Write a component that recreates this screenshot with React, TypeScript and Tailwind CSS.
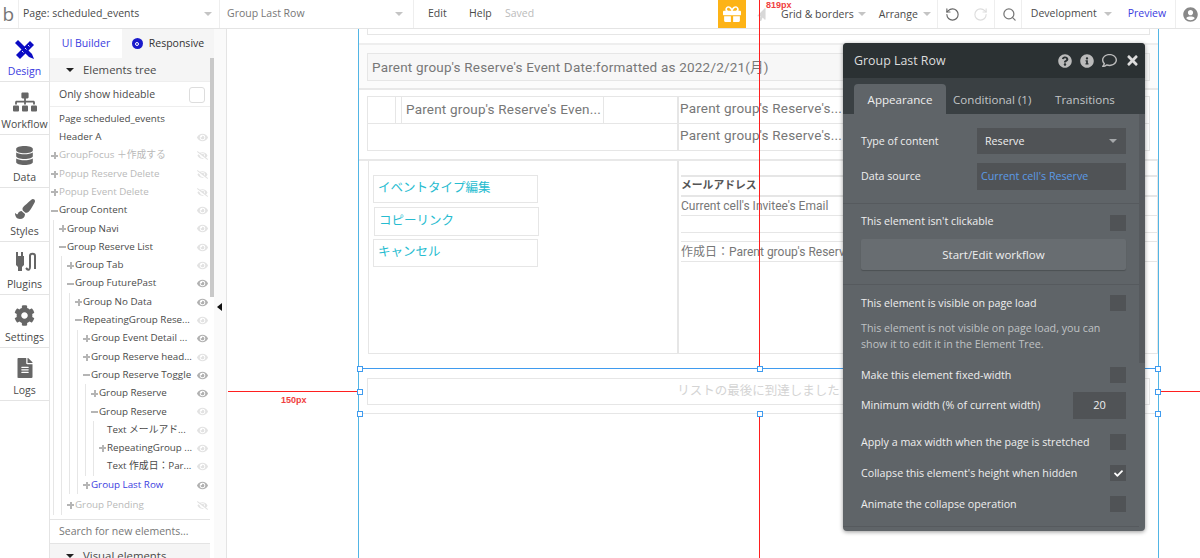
import { FaCheck, FaCog, FaDatabase, FaEye, FaEyeSlash, FaFileAlt, FaGift, FaInfoCircle, FaMousePointer, FaPaintBrush, FaQuestionCircle, FaRegComment, FaSitemap, FaTimes, FaUserCircle } from 'react-icons/fa';
import { RotateCcw, RotateCw, Search } from 'lucide-react';
import type { ReactNode } from 'react';

interface TreeNode {
  label: string;
  sign?: '+' | '-';
  muted?: boolean;
  blue?: boolean;
  spaced?: boolean;
  eye?: 'dark' | 'light' | 'off';
  children?: TreeNode[];
}

const tree: TreeNode[] = [
  { label: 'Page scheduled_events' },
  { label: 'Header A', eye: 'light' },
  { label: 'GroupFocus ＋作成する', sign: '+', muted: true, eye: 'off' },
  { label: 'Popup Reserve Delete', sign: '+', muted: true, eye: 'off' },
  { label: 'Popup Event Delete', sign: '+', muted: true, eye: 'off' },
  {
    label: 'Group Content', sign: '-', eye: 'light',
    children: [
      { label: 'Group Navi', sign: '+', eye: 'light' },
      {
        label: 'Group Reserve List', sign: '-', eye: 'light',
        children: [
          { label: 'Group Tab', sign: '+', eye: 'light' },
          {
            label: 'Group FuturePast', sign: '-', eye: 'dark',
            children: [
              { label: 'Group No Data', sign: '+', eye: 'dark' },
              {
                label: 'RepeatingGroup Rese...', sign: '-', eye: 'light',
                children: [
                  { label: 'Group Event Detail ...', sign: '+', eye: 'dark' },
                  { label: 'Group Reserve head...', sign: '+', eye: 'light' },
                  {
                    label: 'Group Reserve Toggle', sign: '-', eye: 'dark',
                    children: [
                      { label: 'Group Reserve', sign: '+', eye: 'dark' },
                      {
                        label: 'Group Reserve', sign: '-', eye: 'light',
                        children: [
                          { label: 'Text メールアド...', eye: 'light' },
                          { label: 'RepeatingGroup ...', sign: '+', eye: 'light' },
                          { label: 'Text 作成日：Par...', eye: 'light' },
                        ],
                      },
                    ],
                  },
                  { label: 'Group Last Row', sign: '+', blue: true, eye: 'dark' },
                ],
              },
            ],
          },
          { label: 'Group Pending', sign: '+', muted: true, spaced: true, eye: 'off' },
        ],
      },
    ],
  },
];

function TreeRows({ nodes }: { nodes: TreeNode[] }) {
  return (
    <>
      {nodes.map((node, i) => (
        <div key={i} className={node.spaced ? 'pt-[2px]' : ''}>
          <div className="flex h-[18.3px] items-center whitespace-nowrap pr-[2px] text-[9.8px]">
            {node.sign ? (
              <span className="relative h-[8px] w-[8px] shrink-0">
                <span className="absolute left-0 top-[3px] h-[2px] w-[7px] bg-[#b5b5b5]" />
                {node.sign === '+' && <span className="absolute left-[2.5px] top-[0.5px] h-[7px] w-[2px] bg-[#b5b5b5]" />}
              </span>
            ) : (
              <span className="w-[8px] shrink-0" />
            )}
            <span className={node.blue ? 'text-[#3b3be0]' : node.muted ? 'text-[#b9b9b9]' : 'text-[#4a4a4a]'}>{node.label}</span>
            {node.eye === 'dark' && <FaEye className="ml-auto text-[11px] text-[#b0b0b0]" />}
            {node.eye === 'light' && <FaEye className="ml-auto text-[11px] text-[#e2e2e2]" />}
            {node.eye === 'off' && <FaEyeSlash className="ml-auto text-[11px] text-[#e2e2e2]" />}
          </div>
          {node.children && (
            <div className="ml-[2px] border-l border-[#e6e6e6] pl-[5px]">
              <TreeRows nodes={node.children} />
            </div>
          )}
        </div>
      ))}
    </>
  );
}

function DesignIcon() {
  return (
    <svg viewBox="0 0 20 19" className="h-[19px] w-[20px]" fill="#0b0bc4">
      <path d="M3 0 L0 3 L14 17 L19 19 L17 14 Z" />
      <path d="M15 1 L19 5 L5 19 L1 15 Z" />
      <path d="M13 5 L14.5 6.5 M10 8 L11.5 9.5 M7 11 L8.5 12.5" stroke="#ffffff" strokeWidth="0.9" />
    </svg>
  );
}

function PluginIcon() {
  return (
    <svg viewBox="0 0 22 20" className="h-[20px] w-[22px]" fill="none">
      <path d="M2 0h2v4h3V0h2v4h1v9l-2 2v4H4v-4l-2-2V4H0h2z" fill="#666666" />
      <path d="M12 16c2.5 3 4 2 4-1V4c0-3 5-3 5 0v13" stroke="#666666" strokeWidth="2" />
    </svg>
  );
}

const navItems: { label: string; icon: ReactNode; h: string; active?: boolean }[] = [
  { label: 'Design', icon: <DesignIcon />, h: 'h-[53px]', active: true },
  { label: 'Workflow', icon: <FaSitemap className="text-[24px] text-[#666666]" />, h: 'h-[53px]' },
  { label: 'Data', icon: <FaDatabase className="text-[19px] text-[#666666]" />, h: 'h-[53px]' },
  { label: 'Styles', icon: <FaPaintBrush className="text-[20px] text-[#666666]" />, h: 'h-[54px]' },
  { label: 'Plugins', icon: <PluginIcon />, h: 'h-[53px]' },
  { label: 'Settings', icon: <FaCog className="text-[21px] text-[#666666]" />, h: 'h-[53px]' },
  { label: 'Logs', icon: <FaFileAlt className="text-[20px] text-[#666666]" />, h: 'h-[53px]' },
];

function Caret({ className }: { className: string }) {
  return <span className={`inline-block border-x-[4px] border-t-[4px] border-x-transparent ${className}`} />;
}

function TopBar() {
  return (
    <div className="flex h-[29px] items-center whitespace-nowrap border-b border-[#e4e4e4] bg-white text-[10.5px] text-[#4a4a4a]">
      <div className="flex h-full w-[19px] items-center justify-end overflow-hidden border-r border-[#eeeeee] pr-[4px] text-[19px] leading-none text-[#777777]">b</div>
      <div className="flex h-full w-[201px] items-center justify-between border-r border-[#eeeeee] pl-[4px] pr-[7px]">
        <span>Page: scheduled_events</span>
        <Caret className="border-t-[#c4c4c4]" />
      </div>
      <div className="flex h-full w-[194px] items-center justify-between border-r border-[#eeeeee] pl-[7px] pr-[10px] text-[#777777]">
        <span>Group Last Row</span>
        <Caret className="border-t-[#c4c4c4]" />
      </div>
      <span className="ml-[14px] w-[41px]">Edit</span>
      <span className="w-[36px]">Help</span>
      <span className="w-[213px] text-[#bbbbbb]">Saved</span>
      <div className="flex h-full w-[28px] shrink-0 items-center justify-center bg-[#fdb316]">
        <FaGift className="text-[18px] text-white" />
      </div>
      <FaMousePointer className="ml-[9px] shrink-0 -scale-x-100 text-[13px] text-[#d8d8d8]" />
      <span className="ml-[13px] pt-[1px]">Grid &amp; borders</span>
      <Caret className="ml-[4px] border-t-[#c4c4c4]" />
      <span className="ml-[13px] pt-[1px]">Arrange</span>
      <Caret className="ml-[5px] border-t-[#c4c4c4]" />
      <div className="ml-[6px] h-full border-l border-[#eeeeee]" />
      <RotateCcw className="ml-[7px] h-[15px] w-[15px] shrink-0 text-[#666666]" strokeWidth={1.8} />
      <RotateCw className="ml-[13px] h-[15px] w-[15px] shrink-0 text-[#dddddd]" strokeWidth={1.8} />
      <div className="ml-[6px] h-full border-l border-[#eeeeee]" />
      <Search className="ml-[7px] h-[15px] w-[15px] shrink-0 text-[#777777]" strokeWidth={2} />
      <div className="ml-[4px] h-full border-l border-[#eeeeee]" />
      <span className="ml-[9px]">Development</span>
      <Caret className="ml-[7px] border-t-[#c4c4c4]" />
      <span className="ml-[16px] text-[#3b3be0]">Preview</span>
      <div className="ml-[9px] h-full border-l border-[#eeeeee]" />
      <FaUserCircle className="ml-[7px] shrink-0 text-[15px] text-[#888888]" />
    </div>
  );
}

function NavRail() {
  return (
    <div className="w-[50px] shrink-0 border-r border-[#e4e4e4] bg-white">
      {navItems.map((item) => (
        <div key={item.label} className={`flex ${item.h} flex-col items-center justify-center gap-[4px] border-b border-[#e4e4e4] pt-[5px] text-[10.5px] ${item.active ? 'text-[#3b3be0]' : 'text-[#4a4a4a]'}`}>
          <div className="flex h-[24px] items-center">{item.icon}</div>
          <span className="leading-[13px]">{item.label}</span>
        </div>
      ))}
    </div>
  );
}

function Sidebar() {
  return (
    <div className="flex w-[164px] shrink-0 flex-col bg-white text-[10.5px] text-[#4a4a4a]">
      <div className="flex h-[29px] shrink-0 items-center">
        <div className="flex h-full w-[72px] items-center justify-center text-[#3b3be0]">UI Builder</div>
        <div className="flex h-full flex-1 items-center justify-center gap-[6px] bg-[#f5f5f5] text-[#333333]">
          <span className="flex h-[11px] w-[11px] items-center justify-center rounded-full bg-[#1a1acb]">
            <span className="h-[4px] w-[4px] rounded-full border border-white" />
          </span>
          <span>Responsive</span>
        </div>
      </div>
      <div className="flex min-h-0 flex-1">
        <div className="flex min-w-0 flex-1 flex-col">
          <div className="flex h-[24px] shrink-0 items-center gap-[9px] border-b border-[#eeeeee] bg-[#f5f5f5] pl-[16px] pt-[1px] text-[11.4px]">
            <Caret className="border-t-[#222222]" />
            <span>Elements tree</span>
          </div>
          <div className="flex h-[25px] shrink-0 items-center justify-between border-b border-[#eeeeee] pl-[9px] pr-[5px] pt-[1px]">
            <span>Only show hideable</span>
            <span className="h-[16px] w-[16px] rounded-[3px] border border-[#dddddd]" />
          </div>
          <div className="h-[413px] shrink-0 border-b border-[#e4e4e4] pl-[1px] pt-[3px]">
            <TreeRows nodes={tree} />
          </div>
          <div className="flex h-[24px] shrink-0 items-center border-b border-[#e4e4e4] pl-[9px] pt-[1px] text-[#777777]">Search for new elements...</div>
          <div className="flex flex-1 items-center gap-[9px] bg-[#f5f5f5] pl-[16px] pt-[3px] text-[11.4px]">
            <Caret className="border-t-[#222222]" />
            <span>Visual elements</span>
          </div>
        </div>
        <div className="w-[4px] shrink-0 bg-white">
          <div className="h-[239px] w-full bg-[#c9c9c9]" />
        </div>
      </div>
    </div>
  );
}

function Gutter() {
  return (
    <div className="flex w-[13px] shrink-0 items-start border-r border-[#e4e4e4] bg-[#fafafa] pl-[3px] pt-[274px]">
      <span className="h-0 w-0 border-y-[4px] border-r-[5px] border-y-transparent border-r-[#111111]" />
    </div>
  );
}

function Canvas() {
  return (
    <div className="relative min-w-0 flex-1 overflow-hidden bg-white font-['Roboto','Noto_Sans_CJK_JP',sans-serif] text-[#777777]">
      <div className="ml-[131px] h-full w-[801px] border-x border-[#52b5e5]">
        <div className="h-[16px] border-b-2 border-[#eeeeee]">
          <div className="mx-[8px] h-[6px] border-x border-b border-[#e6e6e6]" />
        </div>
        <div className="h-[45px] border-b-2 border-[#e8e8e8] bg-[#fbfbfb] px-[8px] pt-[8px]">
          <div className="flex h-[28px] items-center border border-[#e6e6e6] bg-[#f7f7f7] pl-[4px] text-[13.5px] tracking-[0.2px]">
            Parent group's Reserve's Event Date:formatted as 2022/2/21(月)
          </div>
        </div>
        <div className="h-[71px] border-b-2 border-[#e8e8e8] pt-[6px]">
          <div className="mx-[8px] flex h-[55px] border border-[#e6e6e6]">
            <div className="flex w-[309px] flex-col">
              <div className="flex h-[27px] border-b border-[#e6e6e6]">
                <div className="w-[28px] border-r border-[#e6e6e6]" />
                <div className="ml-[5px] flex w-[203px] items-center whitespace-nowrap border-x border-[#e6e6e6] pb-[1px] pl-[4px] text-[13.5px] tracking-[0.2px]">Parent group's Reserve's Even...</div>
              </div>
            </div>
            <div className="flex flex-1 flex-col whitespace-nowrap border-l-2 border-[#e6e6e6] text-[13.5px] tracking-[0.2px]">
              <div className="flex h-[27px] items-center border-b border-[#e6e6e6] pb-[3px] pl-[1px]">Parent group's Reserve's...</div>
              <div className="flex h-[26px] items-center pb-[3px] pl-[1px]">Parent group's Reserve's...</div>
            </div>
          </div>
        </div>
        <div className="h-[207px] border-b border-white">
          <div className="ml-[9px] flex h-[193px] border-x border-b border-[#e6e6e6]">
            <div className="w-[308px] pl-[4px] pt-[14px] text-[12.5px] text-[#27bcd0]">
              <div className="flex h-[28px] w-[165px] items-start border border-[#e6e6e6] pl-[4px] pt-[3px]">イベントタイプ編集</div>
              <div className="ml-[1px] mt-[4px] flex h-[29px] w-[165px] items-start border border-[#e6e6e6] pl-[4px] pt-[4px]">コピーリンク</div>
              <div className="mt-[3px] flex h-[28px] w-[165px] items-start border border-[#e6e6e6] pl-[4px] pt-[3px]">キャンセル</div>
            </div>
            <div className="flex-1 border-l-2 border-[#e6e6e6] pl-[2px] text-[12px]">
              <div className="h-[16px] border-b-2 border-[#e6e6e6]" />
              <div className="flex h-[20px] items-center border-b-2 border-[#e6e6e6] pt-[1px] text-[10.8px] font-bold text-[#555555]">メールアドレス</div>
              <div className="flex h-[19px] items-start border-b border-[#e6e6e6]">Current cell's Invitee's Email</div>
              <div className="h-[17px] border-b border-[#e6e6e6]" />
              <div className="h-[9px] border-b border-[#e6e6e6]" />
              <div className="flex h-[20px] items-center whitespace-nowrap border-b border-[#e6e6e6]">作成日：Parent group's Reserve's Event Date</div>
            </div>
          </div>
        </div>
        <div className="h-[46px] border-y border-b-[#e6e6e6] border-t-[#3f9bef] px-[8px] pt-[9px]">
          <div className="flex h-[27px] items-center justify-center border border-[#e6e6e6] text-[12.5px] text-[#d4d4d4]">リストの最後に到達しました</div>
        </div>
      </div>
      {/* distance guides */}
      <div className="absolute left-[1px] top-[362px] h-px w-[131px] bg-[#ff1f1f]" />
      <div className="absolute left-[931px] top-[362px] h-px w-[42px] bg-[#ff1f1f]" />
      <span className="absolute left-[54px] top-[365px] font-['Liberation_Sans',sans-serif] text-[9px] font-bold text-[#f04040]">150px</span>
      <div className="absolute left-[532px] top-0 h-[339px] w-px bg-[#ff1f1f]" />
      <div className="absolute bottom-0 left-[532px] top-[385px] w-px bg-[#ff1f1f]" />
      {/* selection handles */}
      <span className="absolute left-[130px] top-[337px] h-[6px] w-[6px] border border-[#3f9bef] bg-white" />
      <span className="absolute left-[130px] top-[360px] h-[6px] w-[6px] border border-[#3f9bef] bg-white" />
      <span className="absolute left-[130px] top-[382px] h-[6px] w-[6px] border border-[#3f9bef] bg-white" />
      <span className="absolute left-[530px] top-[337px] h-[6px] w-[6px] border border-[#3f9bef] bg-white" />
      <span className="absolute left-[530px] top-[382px] h-[6px] w-[6px] border border-[#3f9bef] bg-white" />
      <span className="absolute left-[928px] top-[337px] h-[6px] w-[6px] border border-[#3f9bef] bg-white" />
      <span className="absolute left-[928px] top-[360px] h-[6px] w-[6px] border border-[#3f9bef] bg-white" />
      <span className="absolute left-[928px] top-[382px] h-[6px] w-[6px] border border-[#3f9bef] bg-white" />
    </div>
  );
}

function Check({ checked, className = '' }: { checked?: boolean; className?: string }) {
  return (
    <span className={`flex h-[16px] w-[16px] shrink-0 items-center justify-center bg-[#505356] ${className}`}>
      {checked && <FaCheck className="text-[9px] text-white" />}
    </span>
  );
}

function CheckRow({ label, className, checked, boxClass }: { label: string; className: string; checked?: boolean; boxClass?: string }) {
  return (
    <div className={`flex items-center justify-between ${className}`}>
      <span>{label}</span>
      <Check checked={checked} className={boxClass} />
    </div>
  );
}

function PropertyPanel() {
  return (
    <div className="absolute left-[843px] top-[43px] z-10 flex h-[488px] w-[302px] flex-col overflow-hidden rounded-[4px] bg-[#5f6468] text-[10.7px] text-[#eeeeee] shadow-[0_1px_4px_rgba(0,0,0,0.4)]">
      <div className="flex h-[35px] shrink-0 items-center justify-between bg-[#2b3133] pl-[11px] pr-[5px]">
        <span className="pt-[1px] text-[12.4px] text-[#dddddd]">Group Last Row</span>
        <div className="flex items-center gap-[8px] text-[#bbbbbb]">
          <FaQuestionCircle className="text-[14px]" />
          <FaInfoCircle className="text-[14px]" />
          <FaRegComment className="text-[15px]" />
          <FaTimes className="text-[15px] text-[#dddddd]" />
        </div>
      </div>
      <div className="flex h-[36px] shrink-0 items-end bg-[#3a4043] pl-[11px] text-[11.6px] text-[#c2c5c7]">
        <div className="flex h-[30px] w-[92px] items-center justify-center rounded-t-[4px] bg-[#5f6468] pt-[1px] text-[#eeeeee]">Appearance</div>
        <div className="flex h-[30px] w-[102px] items-center pl-[7px] pt-[1px]">Conditional (1)</div>
        <div className="flex h-[30px] w-[78px] items-center pl-[7px] pt-[1px]">Transitions</div>
      </div>
      <div className="flex min-h-0 flex-1">
        <div className="min-w-0 flex-1">
          <div className="h-[90px] border-b border-[#565a5e] pl-[18px] pr-[13px] pt-[14px]">
            <div className="flex h-[26px] items-center justify-between">
              <span>Type of content</span>
              <div className="flex h-full w-[149px] items-center justify-between bg-[#505356] pl-[8px] pr-[9px]">
                <span>Reserve</span>
                <Caret className="border-t-[#a5a8aa]" />
              </div>
            </div>
            <div className="mt-[9px] flex h-[27px] items-center justify-between">
              <span>Data source</span>
              <div className="flex h-full w-[149px] items-center bg-[#505356] pl-[4px] text-[#5b9be6]">Current cell's Reserve</div>
            </div>
          </div>
          <div className="h-[81px] border-b border-[#565a5e] pl-[18px] pr-[13px]">
            <CheckRow label="This element isn't clickable" className="h-[35px]" boxClass="mt-[3px]" />
            <div className="flex h-[31px] items-center justify-center rounded-[2px] bg-[#686d71] text-[11.5px] shadow-[0_1px_1px_rgba(0,0,0,0.2)]">Start/Edit workflow</div>
          </div>
          <div className="pl-[18px] pr-[13px]">
            <CheckRow label="This element is visible on page load" className="h-[36px]" />
            <p className="-mt-px h-[32px] leading-[16px] text-[#bfc2c4]">This element is not visible on page load, you can show it to edit it in the Element Tree.</p>
            <CheckRow label="Make this element fixed-width" className="mt-[5px] h-[36px]" />
            <div className="-mt-px flex h-[27px] items-center justify-between">
              <span>Minimum width (% of current width)</span>
              <span className="flex h-full w-[53px] items-center justify-center bg-[#505356] text-[11px]">20</span>
            </div>
            <CheckRow label="Apply a max width when the page is stretched" className="mt-[7px] h-[32px]" />
            <CheckRow label="Collapse this element's height when hidden" className="h-[30px]" checked />
            <CheckRow label="Animate the collapse operation" className="h-[32px]" />
          </div>
          <div className="mt-[6px] border-t border-[#565a5e]" />
        </div>
        <div className="w-[6px] shrink-0">
          <div className="h-[249px] bg-[#565a5e]" />
        </div>
      </div>
    </div>
  );
}

export default function App() {
  return (
    <div className="relative h-[558px] w-[1200px] overflow-hidden bg-white font-['Open_Sans','Noto_Sans_CJK_JP',sans-serif]">
      <TopBar />
      <div className="flex h-[529px]">
        <NavRail />
        <Sidebar />
        <Gutter />
        <Canvas />
      </div>
      <span className="absolute left-[766px] top-0 z-10 font-['Liberation_Sans',sans-serif] text-[9px] font-bold leading-[10px] text-[#f04040]">819px</span>
      <div className="absolute left-[759px] top-0 h-[29px] w-px bg-[#ff1f1f]" />
      <PropertyPanel />
    </div>
  );
}
